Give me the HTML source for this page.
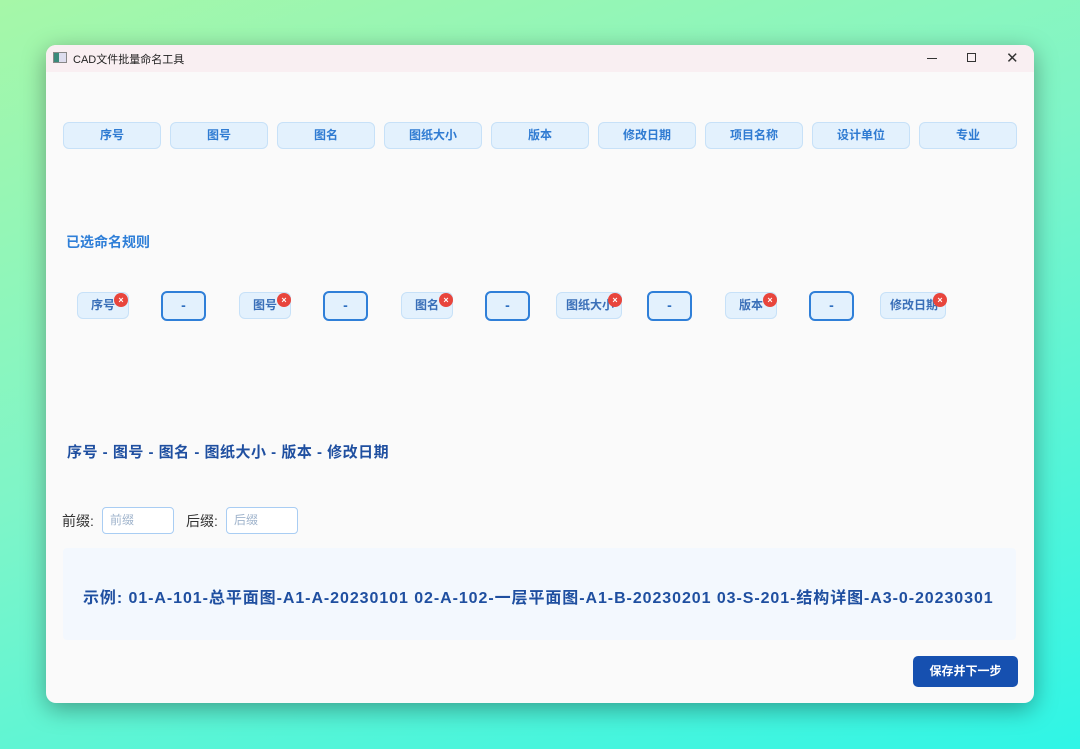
<!DOCTYPE html>
<html><head><meta charset="utf-8"><style>
*{margin:0;padding:0;box-sizing:border-box}
body{width:1080px;height:749px;overflow:hidden;position:relative;background:linear-gradient(160deg,#a6f7a8 0%,#7ef5c8 45%,#2ff5e6 100%);font-family:"Liberation Sans","Noto Sans CJK SC",sans-serif}
.win{position:absolute;left:46px;top:45px;width:988px;height:658px;border-radius:10px;overflow:hidden;background:#fafafa;box-shadow:0 6px 24px rgba(0,0,0,.35)}
.tb{position:absolute;left:0;top:0;width:100%;height:27px;background:#f9eff2}
.a{position:absolute}
.btn{position:absolute;top:77px;width:98px;height:27px;background:#e3f1fd;border:1px solid #c7e1f8;border-radius:6px;color:#2f7bd2;font-size:12px;font-weight:bold;text-align:center;line-height:25px}
.chip{position:absolute;top:247px;height:27px;background:#e3f1fd;border:1px solid #c7e1f8;border-radius:6px;color:#3a6fb8;font-size:12px;font-weight:bold;line-height:25px;padding-left:13px;white-space:nowrap}
.x{position:absolute;top:248px;width:14px;height:14px;border-radius:50%;background:#e8453c;color:#fff;font-size:9px;line-height:14px;text-align:center;font-weight:bold}
.dash{position:absolute;top:246px;width:45px;height:30px;border:2px solid #2f7fd8;border-radius:6px;background:#e3f1fd;color:#2f6fc0;font-weight:bold;font-size:14px;text-align:center;line-height:25px}
.inp{position:absolute;top:462px;width:72px;height:27px;border:1px solid #a9cdf3;border-radius:4px;background:#fff;color:#a0b4cc;font-size:12px;line-height:25px;padding-left:7px}
</style></head><body>
<div class="win">
<div class="tb">
<div class="a" style="left:7px;top:7px;width:14px;height:11px;border:1px solid #888;background:linear-gradient(90deg,#3a8a7a 40%,#dde 40%)"></div>
<div class="a" style="left:27px;top:6px;font-size:11px;color:#222">CAD文件批量命名工具</div>
<div class="a" style="left:881px;top:13px;width:10px;height:1px;background:#333"></div>
<div class="a" style="left:921px;top:8px;width:9px;height:9px;border:1px solid #333"></div>
<div class="a" style="left:960px;top:4px;font-size:15px;color:#333">✕</div>
</div>
<div class="btn" style="left:17px">序号</div>
<div class="btn" style="left:124px">图号</div>
<div class="btn" style="left:231px">图名</div>
<div class="btn" style="left:338px">图纸大小</div>
<div class="btn" style="left:445px">版本</div>
<div class="btn" style="left:552px">修改日期</div>
<div class="btn" style="left:659px">项目名称</div>
<div class="btn" style="left:766px">设计单位</div>
<div class="btn" style="left:873px">专业</div>
<div class="a" style="left:20px;top:187px;font-size:14px;font-weight:bold;color:#2f7fd8">已选命名规则</div>
<div class="chip" style="left:31px;width:52px">序号</div><div class="x" style="left:68px">×</div>
<div class="dash" style="left:115px">-</div>
<div class="chip" style="left:193px;width:52px">图号</div><div class="x" style="left:231px">×</div>
<div class="dash" style="left:277px">-</div>
<div class="chip" style="left:355px;width:52px">图名</div><div class="x" style="left:393px">×</div>
<div class="dash" style="left:439px">-</div>
<div class="chip" style="left:510px;width:66px;padding-left:9px">图纸大小</div><div class="x" style="left:562px">×</div>
<div class="dash" style="left:601px">-</div>
<div class="chip" style="left:679px;width:52px">版本</div><div class="x" style="left:717px">×</div>
<div class="dash" style="left:763px">-</div>
<div class="chip" style="left:834px;width:66px;padding-left:9px">修改日期</div><div class="x" style="left:887px">×</div>
<div class="a" style="left:21px;top:396px;font-size:15px;font-weight:bold;color:#1f4fa0;letter-spacing:0.5px;white-space:nowrap">序号 - 图号 - 图名 - 图纸大小 - 版本 - 修改日期</div>
<div class="a" style="left:16px;top:466px;font-size:14px;color:#333">前缀:</div>
<div class="inp" style="left:56px">前缀</div>
<div class="a" style="left:140px;top:466px;font-size:14px;color:#333">后缀:</div>
<div class="inp" style="left:180px">后缀</div>
<div class="a" style="left:17px;top:503px;width:953px;height:92px;background:#f3f8fe;border-radius:4px"></div>
<div class="a" style="left:37px;top:539px;font-size:16px;font-weight:bold;color:#1f4fa0;white-space:nowrap;letter-spacing:0.93px">示例: 01-A-101-总平面图-A1-A-20230101 02-A-102-一层平面图-A1-B-20230201 03-S-201-结构详图-A3-0-20230301</div>
<div class="a" style="left:867px;top:611px;width:105px;height:31px;background:#1650b0;border-radius:5px;color:#fff;font-size:12px;font-weight:bold;text-align:center;line-height:31px">保存并下一步</div>
</div>
</body></html>
